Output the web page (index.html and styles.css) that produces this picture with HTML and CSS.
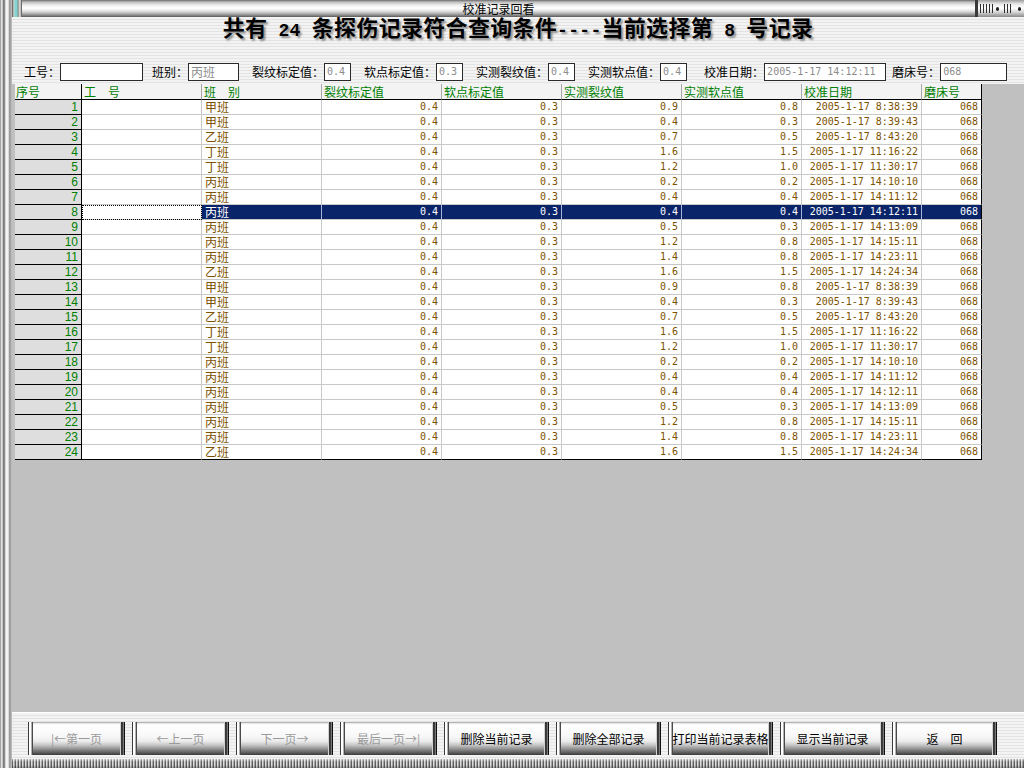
FILE: index.html
```html
<!DOCTYPE html>
<html lang="zh-CN">
<head>
<meta charset="utf-8">
<title>校准记录回看</title>
<link rel="stylesheet" href="styles.css">
</head>
<body>
<div class="window">
  <div class="frame-left"></div>
  <div class="main">
    <div class="titlebar">
      <div class="tb-cap"></div>
      <div class="tb-title">校准记录回看</div>
      <div class="tb-deco">
        <span class="ribs ribs-a"></span><span class="dot"></span><span class="ribs ribs-b"></span><span class="dot"></span>
      </div>
    </div>

    <div class="header">
      <h1>共有<span class="h"> 24 </span>条探伤记录符合查询条件<span class="h">----</span>当前选择第<span class="h"> 8 </span>号记录</h1>
      <div class="form">
        <div class="f f1">工号：<span class="box box-id"></span></div>
        <div class="f f2">班别：<span class="box box-team">丙班</span></div>
        <div class="f f3">裂纹标定值：<span class="box box-val mono">0.4</span></div>
        <div class="f f4">软点标定值：<span class="box box-val mono">0.3</span></div>
        <div class="f f5">实测裂纹值：<span class="box box-val mono">0.4</span></div>
        <div class="f f6">实测软点值：<span class="box box-val mono">0.4</span></div>
        <div class="f f7">校准日期：<span class="box box-date mono">2005-1-17 14:12:11</span></div>
        <div class="f f8">磨床号：<span class="box box-mc mono">068</span></div>
      </div>
    </div>

    <div class="grid-area">
      <div class="grid">
        <div class="row head"><div class="c idx">序号</div><div class="c">工　号</div><div class="c">班　别</div><div class="c">裂纹标定值</div><div class="c">软点标定值</div><div class="c">实测裂纹值</div><div class="c">实测软点值</div><div class="c">校准日期</div><div class="c end">磨床号</div></div>
        <div class="row"><div class="c idx">1</div><div class="c"></div><div class="c t">甲班</div><div class="c n">0.4</div><div class="c n">0.3</div><div class="c n">0.9</div><div class="c n">0.8</div><div class="c n">2005-1-17 8:38:39</div><div class="c n end">068</div></div>
        <div class="row"><div class="c idx">2</div><div class="c"></div><div class="c t">甲班</div><div class="c n">0.4</div><div class="c n">0.3</div><div class="c n">0.4</div><div class="c n">0.3</div><div class="c n">2005-1-17 8:39:43</div><div class="c n end">068</div></div>
        <div class="row"><div class="c idx">3</div><div class="c"></div><div class="c t">乙班</div><div class="c n">0.4</div><div class="c n">0.3</div><div class="c n">0.7</div><div class="c n">0.5</div><div class="c n">2005-1-17 8:43:20</div><div class="c n end">068</div></div>
        <div class="row"><div class="c idx">4</div><div class="c"></div><div class="c t">丁班</div><div class="c n">0.4</div><div class="c n">0.3</div><div class="c n">1.6</div><div class="c n">1.5</div><div class="c n">2005-1-17 11:16:22</div><div class="c n end">068</div></div>
        <div class="row"><div class="c idx">5</div><div class="c"></div><div class="c t">丁班</div><div class="c n">0.4</div><div class="c n">0.3</div><div class="c n">1.2</div><div class="c n">1.0</div><div class="c n">2005-1-17 11:30:17</div><div class="c n end">068</div></div>
        <div class="row"><div class="c idx">6</div><div class="c"></div><div class="c t">丙班</div><div class="c n">0.4</div><div class="c n">0.3</div><div class="c n">0.2</div><div class="c n">0.2</div><div class="c n">2005-1-17 14:10:10</div><div class="c n end">068</div></div>
        <div class="row"><div class="c idx">7</div><div class="c"></div><div class="c t">丙班</div><div class="c n">0.4</div><div class="c n">0.3</div><div class="c n">0.4</div><div class="c n">0.4</div><div class="c n">2005-1-17 14:11:12</div><div class="c n end">068</div></div>
        <div class="row sel"><div class="c idx">8</div><div class="c focus"></div><div class="c t">丙班</div><div class="c n">0.4</div><div class="c n">0.3</div><div class="c n">0.4</div><div class="c n">0.4</div><div class="c n">2005-1-17 14:12:11</div><div class="c n end">068</div></div>
        <div class="row"><div class="c idx">9</div><div class="c"></div><div class="c t">丙班</div><div class="c n">0.4</div><div class="c n">0.3</div><div class="c n">0.5</div><div class="c n">0.3</div><div class="c n">2005-1-17 14:13:09</div><div class="c n end">068</div></div>
        <div class="row"><div class="c idx">10</div><div class="c"></div><div class="c t">丙班</div><div class="c n">0.4</div><div class="c n">0.3</div><div class="c n">1.2</div><div class="c n">0.8</div><div class="c n">2005-1-17 14:15:11</div><div class="c n end">068</div></div>
        <div class="row"><div class="c idx">11</div><div class="c"></div><div class="c t">丙班</div><div class="c n">0.4</div><div class="c n">0.3</div><div class="c n">1.4</div><div class="c n">0.8</div><div class="c n">2005-1-17 14:23:11</div><div class="c n end">068</div></div>
        <div class="row"><div class="c idx">12</div><div class="c"></div><div class="c t">乙班</div><div class="c n">0.4</div><div class="c n">0.3</div><div class="c n">1.6</div><div class="c n">1.5</div><div class="c n">2005-1-17 14:24:34</div><div class="c n end">068</div></div>
        <div class="row"><div class="c idx">13</div><div class="c"></div><div class="c t">甲班</div><div class="c n">0.4</div><div class="c n">0.3</div><div class="c n">0.9</div><div class="c n">0.8</div><div class="c n">2005-1-17 8:38:39</div><div class="c n end">068</div></div>
        <div class="row"><div class="c idx">14</div><div class="c"></div><div class="c t">甲班</div><div class="c n">0.4</div><div class="c n">0.3</div><div class="c n">0.4</div><div class="c n">0.3</div><div class="c n">2005-1-17 8:39:43</div><div class="c n end">068</div></div>
        <div class="row"><div class="c idx">15</div><div class="c"></div><div class="c t">乙班</div><div class="c n">0.4</div><div class="c n">0.3</div><div class="c n">0.7</div><div class="c n">0.5</div><div class="c n">2005-1-17 8:43:20</div><div class="c n end">068</div></div>
        <div class="row"><div class="c idx">16</div><div class="c"></div><div class="c t">丁班</div><div class="c n">0.4</div><div class="c n">0.3</div><div class="c n">1.6</div><div class="c n">1.5</div><div class="c n">2005-1-17 11:16:22</div><div class="c n end">068</div></div>
        <div class="row"><div class="c idx">17</div><div class="c"></div><div class="c t">丁班</div><div class="c n">0.4</div><div class="c n">0.3</div><div class="c n">1.2</div><div class="c n">1.0</div><div class="c n">2005-1-17 11:30:17</div><div class="c n end">068</div></div>
        <div class="row"><div class="c idx">18</div><div class="c"></div><div class="c t">丙班</div><div class="c n">0.4</div><div class="c n">0.3</div><div class="c n">0.2</div><div class="c n">0.2</div><div class="c n">2005-1-17 14:10:10</div><div class="c n end">068</div></div>
        <div class="row"><div class="c idx">19</div><div class="c"></div><div class="c t">丙班</div><div class="c n">0.4</div><div class="c n">0.3</div><div class="c n">0.4</div><div class="c n">0.4</div><div class="c n">2005-1-17 14:11:12</div><div class="c n end">068</div></div>
        <div class="row"><div class="c idx">20</div><div class="c"></div><div class="c t">丙班</div><div class="c n">0.4</div><div class="c n">0.3</div><div class="c n">0.4</div><div class="c n">0.4</div><div class="c n">2005-1-17 14:12:11</div><div class="c n end">068</div></div>
        <div class="row"><div class="c idx">21</div><div class="c"></div><div class="c t">丙班</div><div class="c n">0.4</div><div class="c n">0.3</div><div class="c n">0.5</div><div class="c n">0.3</div><div class="c n">2005-1-17 14:13:09</div><div class="c n end">068</div></div>
        <div class="row"><div class="c idx">22</div><div class="c"></div><div class="c t">丙班</div><div class="c n">0.4</div><div class="c n">0.3</div><div class="c n">1.2</div><div class="c n">0.8</div><div class="c n">2005-1-17 14:15:11</div><div class="c n end">068</div></div>
        <div class="row"><div class="c idx">23</div><div class="c"></div><div class="c t">丙班</div><div class="c n">0.4</div><div class="c n">0.3</div><div class="c n">1.4</div><div class="c n">0.8</div><div class="c n">2005-1-17 14:23:11</div><div class="c n end">068</div></div>
        <div class="row last"><div class="c idx">24</div><div class="c"></div><div class="c t">乙班</div><div class="c n">0.4</div><div class="c n">0.3</div><div class="c n">1.6</div><div class="c n">1.5</div><div class="c n">2005-1-17 14:24:34</div><div class="c n end">068</div></div>
      </div>
    </div>

    <div class="btns">
      <div class="btn off">|←第一页</div>
      <div class="btn off">←上一页</div>
      <div class="btn off">下一页→</div>
      <div class="btn off">最后一页→|</div>
      <div class="btn wide">删除当前记录</div>
      <div class="btn wide">删除全部记录</div>
      <div class="btn wide">打印当前记录表格</div>
      <div class="btn wide">显示当前记录</div>
      <div class="btn wide">返　回</div>
    </div>
    <div class="strip"></div>
  </div>
</div>
</body>
</html>
```

FILE: styles.css
```css
html, body {
  margin: 0;
  padding: 0;
}

body {
  width: 1024px;
  height: 768px;
  overflow: hidden;
  font-family: "Noto Sans CJK SC", "Noto Sans", sans-serif;
  font-size: 12px;
  color: #000;
  background: #c0c0c0;
}

.window {
  display: flex;
  width: 1024px;
  height: 768px;
}

.frame-left {
  width: 12px;
  flex: none;
  background: linear-gradient(90deg, #7a7a7a 0, #cfcfcf 1px, #f2f2f2 2px, #9a9a9a 3px, #5c5c5c 4px, #bdbdbd 5px, #ececec 6px, #ffffff 7px, #cccccc 9px, #6e6e6e 10px, #d8d8d8 11px, #9c9c9c 12px);
}

.main {
  flex: 1;
  min-width: 0;
  display: flex;
  flex-direction: column;
}

/* title bar */
.titlebar {
  height: 17px;
  flex: none;
  display: flex;
  background: linear-gradient(180deg, #6c6c6c 0, #bcbcbc 2px, #ececec 5px, #ffffff 8px, #e4e4e4 11px, #a8a8a8 14px, #5a5a5a 17px);
}

.tb-cap {
  width: 10px;
  flex: none;
  background: linear-gradient(90deg, #4a4a4a 0, #d8d8d8 2px, #7fd6cf 3px, #7fd6cf 5px, #8a8a8a 6px, #eeeeee 8px, #3e3e3e 10px);
}

.tb-title {
  flex: 1;
  text-align: center;
  line-height: 17px;
  font-size: 12px;
}

.tb-deco {
  width: 49px;
  flex: none;
  display: flex;
  align-items: center;
  box-sizing: border-box;
  border-left: 3px solid #3a3a3a;
  padding-left: 2px;
  background: linear-gradient(180deg, #9c9c9c 0, #e8e8e8 4px, #ffffff 8px, #d8d8d8 12px, #8a8a8a 17px);
}

.ribs {
  height: 9px;
  background: repeating-linear-gradient(90deg, #2e2e2e 0 1px, transparent 1px 3px);
}

.ribs-a { width: 16px; }
.ribs-b { width: 10px; margin: 0 2px; }

.dot {
  width: 4px;
  height: 4px;
  border-radius: 50%;
  background: #222;
  margin: 0 3px;
}

/* header */
.header {
  height: 67px;
  flex: none;
  background: repeating-linear-gradient(180deg, #f3f3f3 0 2px, #e3e3e3 2px 3px);
}

h1 {
  margin: 0;
  font-size: 22px;
  line-height: 18px;
  font-weight: 700;
  text-align: center;
  letter-spacing: 0.3px;
  text-shadow: 2px 2px 2px #8a8a8a;
}

h1 .h {
  font-family: "Liberation Mono", monospace;
  font-size: 18px;
  white-space: pre;
}

.form {
  display: flex;
  align-items: center;
  height: 18px;
  margin-top: 23px;
}

.f {
  display: flex;
  align-items: center;
  white-space: nowrap;
  line-height: 18px;
}

.f1 { margin-left: 12px; }
.f2 { margin-left: 9px; }
.f3 { margin-left: 13px; }
.f4 { margin-left: 13px; }
.f5 { margin-left: 13px; }
.f6 { margin-left: 13px; }
.f7 { margin-left: 17px; }
.f8 { margin-left: 6px; }

.box {
  display: block;
  box-sizing: border-box;
  height: 18px;
  border: 1px solid #2a2a2a;
  background: #fff;
  color: #8c8c8c;
  padding-left: 2px;
  line-height: 16px;
  white-space: nowrap;
}

.box.mono {
  font-family: "DejaVu Sans Mono", monospace;
  font-size: 10px;
}

.box-id { width: 83px; }
.box-team { width: 51px; }
.box-val { width: 27px; }
.box-date { width: 122px; }
.box-mc { width: 67px; }

/* grid */
.grid-area {
  flex: 1;
  margin-left: 3px;
  background: #c0c0c0;
}

.grid {
  width: 967px;
}

.row {
  display: grid;
  grid-template-columns: 67px repeat(7, 120px) 60px;
}

.c {
  box-sizing: border-box;
  height: 15px;
  padding: 0 3px;
  border-right: 1px solid #c8c8c8;
  border-bottom: 1px solid #c8c8c8;
  background: #fff;
  color: #7d5200;
  line-height: 14px;
  font-size: 12px;
  white-space: nowrap;
}

.c.n {
  text-align: right;
  font-family: "DejaVu Sans Mono", monospace;
  font-size: 10px;
}

.c.idx {
  background: #dedede;
  color: #008000;
  text-align: right;
  font-family: "Liberation Sans", sans-serif;
  border-right-color: #000;
  border-bottom-color: #000;
}

.c.end {
  border-right-color: #000;
}

.head .c {
  height: 16px;
  line-height: 15px;
  background: #f3f3f3;
  color: #008000;
  text-align: left;
  font-family: "Noto Sans CJK SC", sans-serif;
  font-size: 12px;
  padding-left: 2px;
  border-right-color: #a8a8a8;
  border-bottom-color: #000;
}

.head .c.idx {
  border-right-color: #000;
  padding-left: 1px;
}

.head .c.end {
  border-right-color: #000;
}

.last .c {
  border-bottom-color: #000;
}

.sel .c.t,
.sel .c.n {
  background: #0a246a;
  color: #fff;
  border-right-color: #a9b6d6;
}

.sel .c.n.end {
  border-right-color: #000;
}

.c.focus {
  outline: 1px dotted #000;
  outline-offset: -1px;
}

/* buttons */
.btns {
  height: 47px;
  flex: none;
  box-sizing: border-box;
  display: flex;
  gap: 7px;
  padding: 9px 0 0 16px;
  border-top: 1px solid #fff;
  background: repeating-linear-gradient(180deg, #f3f3f3 0 2px, #e3e3e3 2px 3px);
}

.btn {
  box-sizing: border-box;
  width: 97px;
  height: 33px;
  flex: none;
  display: flex;
  align-items: center;
  justify-content: center;
  white-space: nowrap;
  font-size: 12px;
  color: #000;
  background: linear-gradient(180deg, #8a8a8a 0, #e2e2e2 1px, #ffffff 3px, #f7f7f7 45%, #ececec 58%, #c6c6c6 70%, #8c8c8c 83%, #3a3a3a 100%);
  box-shadow:
    inset 1px 0 0 #3c3c3c,
    inset 3px 0 0 #ffffff,
    inset 4px 0 0 #b0b0b0,
    inset 5px 0 0 #4a4a4a,
    inset -1px 0 0 #111111,
    inset -2px 0 0 #7a7a7a,
    inset -4px 0 0 #3a3a3a,
    inset -5px 0 0 #d0d0d0;
}

.btn.wide {
  width: 105px;
}

.btn.off {
  color: #9a9a9a;
}

.strip {
  height: 9px;
  flex: none;
  background:
    linear-gradient(180deg, rgba(255,255,255,0.55) 0, rgba(255,255,255,0) 3px, rgba(0,0,0,0) 6px, rgba(0,0,0,0.25) 9px),
    repeating-linear-gradient(90deg, #5e5e5e 0 1px, #dcdcdc 1px 2px, #a4a4a4 2px 3px);
}
```
